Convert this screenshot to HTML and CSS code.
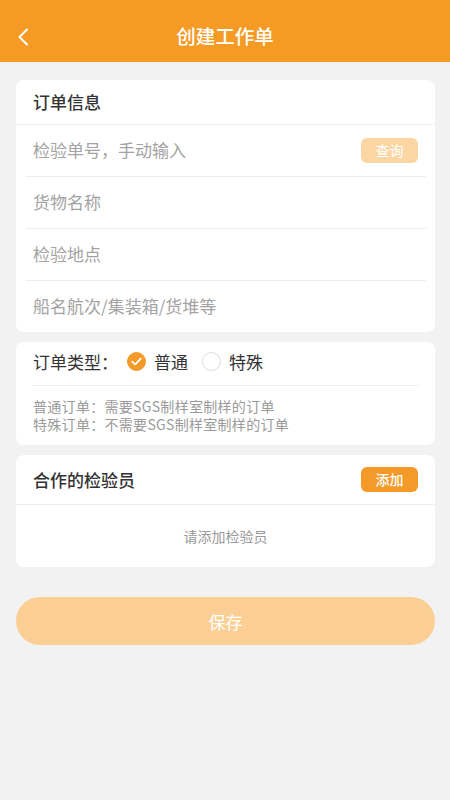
FILE: index.html
```html
<!DOCTYPE html>
<html lang="zh-CN">
<head>
<meta charset="utf-8">
<title>创建工作单</title>
<link rel="stylesheet" href="styles.css">
</head>
<body>
<header class="topbar">
  <span class="back">
    <svg width="14" height="18" viewBox="0 0 14 18"><polyline points="11,1.5 3.5,9 11,16.5" fill="none" stroke="#fff" stroke-width="2" stroke-linecap="round" stroke-linejoin="round"/></svg>
  </span>
  <h1 class="title">创建工作单</h1>
</header>
<main class="content">
  <section class="card">
    <div class="card-head">订单信息</div>
    <div class="rows">
      <div class="row"><span class="ph">检验单号，手动输入</span><span class="btn btn-light">查询</span></div>
      <div class="row"><span class="ph">货物名称</span></div>
      <div class="row"><span class="ph">检验地点</span></div>
      <div class="row last"><span class="ph">船名航次/集装箱/货堆等</span></div>
    </div>
  </section>

  <section class="card card-type">
    <div class="type-row">
      <span class="label">订单类型：</span>
      <span class="radio">
        <span class="dot checked"><svg width="11" height="9" viewBox="0 0 11 9"><polyline points="1.2,4.6 4.2,7.4 9.8,1.6" fill="none" stroke="#fff" stroke-width="1.8" stroke-linecap="round" stroke-linejoin="round"/></svg></span>
        <span class="rtext">普通</span>
      </span>
      <span class="radio">
        <span class="dot"></span>
        <span class="rtext">特殊</span>
      </span>
    </div>
    <div class="desc">
      <p>普通订单：需要SGS制样室制样的订单</p>
      <p>特殊订单：不需要SGS制样室制样的订单</p>
    </div>
  </section>

  <section class="card">
    <div class="card-head head-btn"><span>合作的检验员</span><span class="btn btn-solid">添加</span></div>
    <div class="empty">请添加检验员</div>
  </section>

  <div class="save">保存</div>
</main>
</body>
</html>
```

FILE: styles.css
```css
* { box-sizing: border-box; }
html, body { margin: 0; padding: 0; }
body {
  background: #f2f2f2;
  font-family: "Noto Sans CJK SC", "Noto Sans", sans-serif;
  color: #333;
  width: 450px;
  min-height: 800px;
}
.topbar {
  height: 62px;
  background: #f59b25;
  display: flex;
  align-items: center;
  justify-content: center;
  position: relative;
}
.back {
  position: absolute;
  left: 16px;
  top: 28px;
  width: 14px;
  height: 18px;
  display: flex;
}
.title {
  margin: 0;
  margin-top: 10px;
  font-size: 19.5px;
  line-height: 26px;
  font-weight: 500;
  color: #fff;
}
.content {
  padding: 18px 15px 0 16px;
  display: flex;
  flex-direction: column;
  gap: 10px;
}
.card {
  background: #fff;
  border-radius: 8px;
  overflow: hidden;
}
.card-head {
  height: 45px;
  padding: 0 17px 1px;
  display: flex;
  align-items: center;
  font-size: 17px;
  font-weight: 500;
  color: #333;
  border-bottom: 1px solid #eeeeee;
}
.head-btn {
  height: 50px;
  justify-content: space-between;
}
.rows { padding: 0 9px 0 10px; }
.row {
  height: 52px;
  display: flex;
  align-items: center;
  justify-content: space-between;
  padding: 0 8px 1px 7px;
  border-bottom: 1px solid #eeeeee;
}
.row.last { border-bottom: none; height: 51px; }
.ph {
  font-size: 17px;
  color: #a3a3a3;
  line-height: 24px;
}
.btn {
  width: 57px;
  height: 25px;
  border-radius: 6px;
  color: #fff;
  font-size: 14px;
  display: flex;
  align-items: center;
  justify-content: center;
  line-height: 1;
}
.btn-light { background: #fbd6a3; }
.btn-solid { background: #f39a28; }
.card-type { padding: 0 17px; }
.type-row {
  height: 44px;
  padding-bottom: 4px;
  display: flex;
  align-items: center;
  border-bottom: 1px solid #eeeeee;
}
.label {
  font-size: 17px;
  color: #333;
  width: 94px;
}
.radio {
  display: flex;
  align-items: center;
  margin-right: 14px;
}
.dot {
  width: 19px;
  height: 19px;
  border-radius: 50%;
  border: 1px solid #dcdcdc;
  display: flex;
  align-items: center;
  justify-content: center;
}
.dot.checked {
  background: #f39a28;
  border-color: #f39a28;
}
.rtext {
  font-size: 17px;
  color: #333;
  margin-left: 8px;
}
.desc {
  padding: 11px 0 12px;
}
.desc p {
  margin: 0;
  font-size: 14px;
  line-height: 18px;
  letter-spacing: 0.3px;
  color: #9a9a9a;
}
.empty {
  height: 62px;
  display: flex;
  align-items: center;
  justify-content: center;
  font-size: 14px;
  color: #999;
}
.save {
  margin-top: 20px;
  height: 48px;
  border-radius: 24px;
  background: #fbcf93;
  color: #fff;
  font-size: 17px;
  display: flex;
  align-items: center;
  justify-content: center;
}
```
